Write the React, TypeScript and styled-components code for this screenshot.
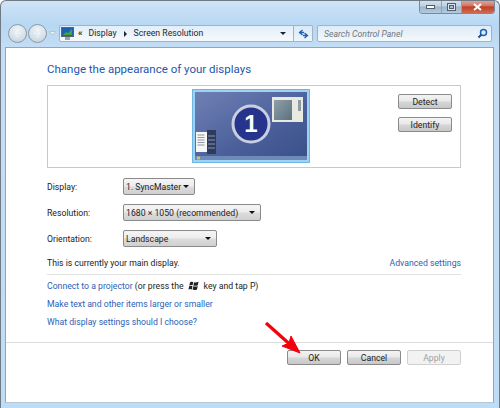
import React from 'react';
import styled, { createGlobalStyle } from 'styled-components';

const Global = createGlobalStyle`
  html, body {
    margin: 0;
    padding: 0;
    background: #fff;
  }
  body {
    font-family: Roboto, 'Open Sans', sans-serif;
    font-size: 8.7px;
    color: #1c1c1c;
  }
`;

const Frame = styled.div`
  position: relative;
  box-sizing: border-box;
  width: 500px;
  height: 408px;
  padding: 1px 5px 5px 4px;
  display: flex;
  flex-direction: column;
  overflow: hidden;
  border: 1px solid #6f7a84;
  border-bottom: 0;
  border-radius: 6px 6px 0 0;
  background: linear-gradient(180deg, #cfe3f5 0%, #b7d7f3 6%, #c4def5 12%, #bfdcf6 100%);
`;

const CaptionRow = styled.div`
  display: flex;
  justify-content: flex-end;
  height: 14px;
  margin: -2px -1px 0 0;
`;
const CaptionBox = styled.div`
  display: flex;
  width: 76px;
  height: 14px;
  border: 1px solid #7b8a98;
  border-top: 0;
  border-radius: 0 0 4px 4px;
  box-sizing: border-box;
  overflow: hidden;
`;
const CaptionButton = styled.div<{ $w: number; $close?: boolean }>`
  width: ${(p) => p.$w}px;
  display: flex;
  align-items: center;
  justify-content: center;
  border-right: ${(p) => (p.$close ? '0' : '1px solid #8fa3b5')};
  background: ${(p) =>
    p.$close
      ? 'linear-gradient(180deg, #e3a99f 0%, #d27f6e 40%, #c2402a 55%, #cf6a50 100%)'
      : 'linear-gradient(180deg, #d3e3f1 0%, #bdd2e5 45%, #9fb5c9 55%, #b4cade 100%)'};
`;

const NavRow = styled.div`
  display: flex;
  align-items: center;
  height: 17px;
  margin: 11px 0 0 3px;
`;
const NavCircle = styled.div`
  box-sizing: border-box;
  width: 19px;
  height: 19px;
  margin-right: 1px;
  border-radius: 50%;
  border: 1px solid #8c9aa6;
  background: radial-gradient(circle at 50% 30%, #eef3f7 0%, #d8e2ea 55%, #bccad6 100%);
  display: flex;
  align-items: center;
  justify-content: center;
`;
const NavDrop = styled.svg`
  width: 7px;
  height: 5px;
  margin: 0 3px 0 1px;
`;
const AddressBar = styled.div`
  box-sizing: border-box;
  width: 235px;
  height: 17px;
  display: flex;
  align-items: center;
  padding-left: 1px;
  border: 1px solid #9fb4c6;
  border-radius: 2px 0 0 2px;
  background: linear-gradient(180deg, #e3eef8 0%, #f5f9fd 100%);
  color: #23282d;
`;
const Crumb = styled.span`
  line-height: 15px;
`;
const CrumbArrow = styled.span`
  width: 0;
  height: 0;
  margin: 0 7px;
  border-left: 3px solid #1c2630;
  border-top: 3px solid transparent;
  border-bottom: 3px solid transparent;
`;
const DoubleArrow = styled.span`
  margin: 0 6px 0 4px;
  font-size: 9px;
  font-weight: 700;
  line-height: 15px;
`;
const AddressEnd = styled.div`
  margin-left: auto;
  margin-right: 7px;
  width: 0;
  height: 0;
  border-top: 3px solid #10233a;
  border-left: 3px solid transparent;
  border-right: 3px solid transparent;
`;
const RefreshBox = styled.div`
  box-sizing: border-box;
  width: 19px;
  height: 17px;
  display: flex;
  align-items: center;
  justify-content: center;
  border: 1px solid #9fb4c6;
  border-left: 0;
  border-radius: 0 2px 2px 0;
  background: linear-gradient(180deg, #dbe9f6 0%, #eef5fb 100%);
`;
const SearchBox = styled.div`
  box-sizing: border-box;
  width: 175px;
  height: 17px;
  margin-left: 4px;
  padding: 0 3px 0 6px;
  display: flex;
  align-items: center;
  justify-content: space-between;
  border: 1px solid #9fb4c6;
  border-radius: 2px;
  background: linear-gradient(180deg, #dfebf6 0%, #f3f8fc 100%);
  color: #6d7780;
  font-style: italic;
`;

const Content = styled.div`
  flex: 1;
  margin-top: 5px;
  background: #fff;
  border: 1px solid #98a5b0;
  border-bottom-color: #b4c8d8;
  display: flex;
  flex-direction: column;
  min-height: 0;
`;
const Body = styled.div`
  padding: 13px 32px 0 41px;
  flex: 1;
`;
const Heading = styled.h1`
  margin: 0;
  font-size: 11.5px;
  font-weight: 400;
  line-height: 16px;
  color: #2456ab;
`;
const Panel = styled.div`
  box-sizing: border-box;
  height: 83px;
  margin-top: 8px;
  border: 1px solid #c9c9c9;
  position: relative;
  display: flex;
  justify-content: center;
  align-items: center;
  padding: 0 7px 2px 0;
`;
const MonitorArt = styled.svg`
  width: 118px;
  height: 74px;
  display: block;
`;
const PanelButtons = styled.div`
  position: absolute;
  top: 8px;
  right: 8px;
  display: flex;
  flex-direction: column;
  gap: 8px;
`;
const Button = styled.div<{ $disabled?: boolean }>`
  box-sizing: border-box;
  width: 54px;
  height: 15px;
  display: flex;
  align-items: center;
  justify-content: center;
  border: 1px solid ${(p) => (p.$disabled ? '#cfcfcf' : '#8a8a8a')};
  border-radius: 2px;
  color: ${(p) => (p.$disabled ? '#a0a0a0' : '#1c1c1c')};
  background: ${(p) =>
    p.$disabled
      ? '#f2f2f2'
      : 'linear-gradient(180deg, #f4f4f4 0%, #e8e8e8 48%, #d6d6d6 52%, #c8c8c8 100%)'};
`;
const Settings = styled.div`
  margin-top: 10px;
  display: flex;
  flex-direction: column;
  gap: 9px;
`;
const Row = styled.div`
  display: flex;
  align-items: center;
  height: 17px;
`;
const Label = styled.div`
  width: 76px;
  padding-top: 1px;
`;
const Select = styled.div<{ $w: number }>`
  box-sizing: border-box;
  width: ${(p) => p.$w}px;
  height: 17px;
  display: flex;
  align-items: center;
  justify-content: space-between;
  padding: 0 5px 0 2px;
  border: 1px solid #8a8a8a;
  border-radius: 2px;
  white-space: nowrap;
  background: linear-gradient(180deg, #f5f5f5 0%, #ececec 48%, #dcdcdc 52%, #d0d0d0 100%);
`;
const Caret = styled.span`
  width: 0;
  height: 0;
  border-top: 3px solid #111;
  border-left: 3px solid transparent;
  border-right: 3px solid transparent;
`;
const StatusRow = styled.div`
  margin-top: 8px;
  height: 15px;
  display: flex;
  align-items: center;
  justify-content: space-between;
  padding-bottom: 4px;
  border-bottom: 1px solid #e2e2e2;
`;
const Anchor = styled.a`
  color: #2a62b8;
`;
const LinkList = styled.div`
  margin-top: 2px;
  display: flex;
  flex-direction: column;
`;
const LinkRow = styled.div`
  height: 18px;
  display: flex;
  align-items: center;
  white-space: pre;
`;
const WinLogo = styled.svg`
  width: 11px;
  height: 10px;
  margin: 0 5px 0 4px;
`;
const Footer = styled.div`
  height: 60px;
  box-sizing: border-box;
  padding: 7px 32px 0 0;
  border-top: 1px solid #dcdcdc;
  display: flex;
  justify-content: flex-end;
  gap: 6px;
`;
const Pointer = styled.svg`
  position: absolute;
  left: 261px;
  top: 319px;
  width: 42px;
  height: 38px;
`;

function Monitor() {
  return (
    <MonitorArt viewBox="0 0 118 74">
      <defs>
        <linearGradient id="wall" x1="0" y1="0" x2="1" y2="1">
          <stop offset="0" stopColor="#6f80b4" />
          <stop offset="0.6" stopColor="#4a5f9a" />
          <stop offset="1" stopColor="#3a5088" />
        </linearGradient>
        <linearGradient id="pane" x1="0" y1="0" x2="1" y2="1">
          <stop offset="0" stopColor="#8fa0a6" />
          <stop offset="1" stopColor="#5b7182" />
        </linearGradient>
      </defs>
      <rect x="0.5" y="0.5" width="117" height="73" fill="#9ed2f2" stroke="#6fb5e6" />
      <rect x="3" y="3" width="112" height="68" fill="url(#wall)" />
      <rect x="3" y="67" width="112" height="4" fill="#6d8ab8" />
      <rect x="5" y="67.5" width="3" height="3" fill="#d8c060" />
      <rect x="80" y="8" width="31" height="25" fill="#e9e9e2" />
      <rect x="82" y="11" width="18" height="20" fill="url(#pane)" />
      <rect x="106" y="11" width="3" height="11" fill="#8d9aa8" />
      <rect x="15" y="41" width="9" height="24" fill="#2f3b5e" />
      <path d="M16 47h7M16 51h7M16 55h7M16 59h7" stroke="#8a93a8" strokeWidth="1.200" />
      <rect x="4" y="43" width="11" height="20" fill="#f6f6f6" />
      <path d="M5.500 46h7M5.500 48.500h7M5.500 51h7M5.500 53.500h7M5.500 56h7" stroke="#77808a" strokeWidth="0.8" />
      <circle cx="59" cy="35" r="18" fill="#27348b" stroke="#c9cfe0" strokeWidth="3" />
      <text
        x="59"
        y="43"
        textAnchor="middle"
        fontFamily="'Liberation Sans', sans-serif"
        fontSize="24"
        fontWeight="700"
        fill="#fff"
      >
        1
      </text>
    </MonitorArt>
  );
}

function App() {
  return (
    <Frame>
      <Global />
      <CaptionRow>
        <CaptionBox>
          <CaptionButton $w={22}>
            <svg width="9" height="5" viewBox="0 0 9 5"><rect x="0.500" y="1.500" width="8" height="3" fill="#fff" stroke="#4e5e6c" /></svg>
          </CaptionButton>
          <CaptionButton $w={19}>
            <svg width="9" height="8" viewBox="0 0 9 8"><rect x="0.500" y="0.500" width="8" height="7" fill="#dbe6ef" stroke="#4e5e6c" /><rect x="2.500" y="2.500" width="4" height="3" fill="#a9bccb" stroke="#4e5e6c" /></svg>
          </CaptionButton>
          <CaptionButton $w={33} $close>
            <svg width="9" height="8" viewBox="0 0 9 8"><path d="M1 1l7 6M8 1l-7 6" stroke="#fff" strokeWidth="2" /></svg>
          </CaptionButton>
        </CaptionBox>
      </CaptionRow>
      <NavRow>
        <NavCircle>
          <svg width="9" height="9" viewBox="0 0 9 9"><path d="M5 1L2 4.500 5 8M2 4.500h6" fill="none" stroke="#eef3f7" strokeWidth="1.200" /></svg>
        </NavCircle>
        <NavCircle>
          <svg width="9" height="9" viewBox="0 0 9 9"><path d="M4 1l3 3.500L4 8M7 4.500H1" fill="none" stroke="#eef3f7" strokeWidth="1.200" /></svg>
        </NavCircle>
        <NavDrop viewBox="0 0 7 5"><path d="M0.500 0.500h6L3.500 4z" fill="#eef4f9" stroke="#a9b7c4" strokeWidth="0.700" /></NavDrop>
        <AddressBar>
          <svg width="13" height="14" viewBox="0 0 13 14">
            <rect x="0.500" y="0.500" width="12" height="9" fill="#1d5fb0" stroke="#5b6570" />
            <path d="M2 8l3-3 2 1 4-4v6H2z" fill="#3fa34a" />
            <rect x="4" y="10" width="5" height="3" fill="#9aa3ab" />
          </svg>
          <DoubleArrow>«</DoubleArrow>
          <Crumb>Display</Crumb>
          <CrumbArrow />
          <Crumb>Screen Resolution</Crumb>
          <AddressEnd />
        </AddressBar>
        <RefreshBox>
          <svg width="11" height="10" viewBox="0 0 11 10">
            <path d="M4.500 1L1.500 3.500 4.500 6M2 3.500h4M6.500 4l3 2.500-3 2.500M9 6.500H5" fill="none" stroke="#1f62b4" strokeWidth="1.300" />
          </svg>
        </RefreshBox>
        <SearchBox>
          <span>Search Control Panel</span>
          <svg width="11" height="11" viewBox="0 0 11 11">
            <circle cx="6.500" cy="4.500" r="3" fill="#d8ecfa" stroke="#1c63ae" strokeWidth="1.500" />
            <path d="M4.500 6.500L1.500 9.500" stroke="#1c4f8e" strokeWidth="2" />
          </svg>
        </SearchBox>
      </NavRow>
      <Content>
        <Body>
          <Heading>Change the appearance of your displays</Heading>
          <Panel>
            <Monitor />
            <PanelButtons>
              <Button>Detect</Button>
              <Button>Identify</Button>
            </PanelButtons>
          </Panel>
          <Settings>
            <Row>
              <Label>Display:</Label>
              <Select $w={72}>1. SyncMaster<Caret /></Select>
            </Row>
            <Row>
              <Label>Resolution:</Label>
              <Select $w={138}>1680 × 1050 (recommended)<Caret /></Select>
            </Row>
            <Row>
              <Label>Orientation:</Label>
              <Select $w={94}>Landscape<Caret /></Select>
            </Row>
          </Settings>
          <StatusRow>
            <span>This is currently your main display.</span>
            <Anchor>Advanced settings</Anchor>
          </StatusRow>
          <LinkList>
            <LinkRow>
              <Anchor>Connect to a projector</Anchor> (or press the
              <WinLogo viewBox="0 0 11 10">
                <path d="M2 1.200Q3.500 0.200 5.200 1L4.600 4.300Q3 3.500 1.300 4.500z" fill="#222" />
                <path d="M6 1.200Q8 2 10.500 0.800L9.800 4.200Q7.500 5.200 5.400 4.500z" fill="#222" />
                <path d="M1.100 5.200Q2.800 4.300 4.400 5L3.800 8.400Q2.200 7.700 0.500 8.600z" fill="#222" />
                <path d="M5.200 5.200Q7.400 6 9.700 5L9 8.400Q6.800 9.300 4.600 8.600z" fill="#222" />
              </WinLogo>
              key and tap P)
            </LinkRow>
            <LinkRow><Anchor>Make text and other items larger or smaller</Anchor></LinkRow>
            <LinkRow><Anchor>What display settings should I choose?</Anchor></LinkRow>
          </LinkList>
        </Body>
        <Footer>
          <Button>OK</Button>
          <Button>Cancel</Button>
          <Button $disabled>Apply</Button>
        </Footer>
      </Content>
      <Pointer viewBox="0 0 42 38">
        <path d="M4 3L32 28" stroke="#f4000d" strokeWidth="3.200" fill="none" />
        <path d="M38 33L20 26L27 23L29 16z" fill="#f4000d" stroke="#f4000d" strokeWidth="1" />
      </Pointer>
    </Frame>
  );
}

export default App;
